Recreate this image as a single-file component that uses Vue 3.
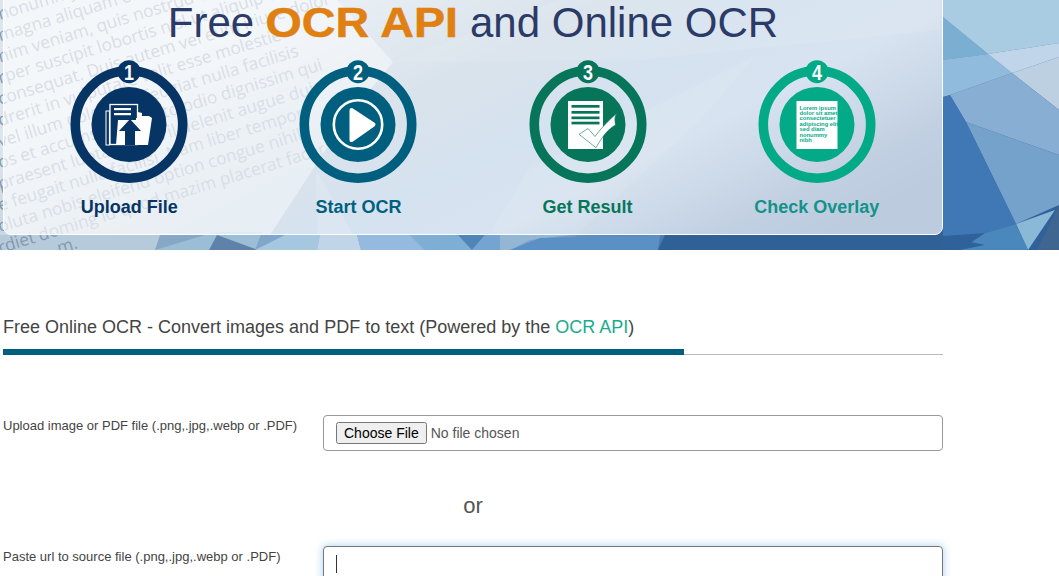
<script setup>
const steps = [
  { n: '1', label: 'Upload File', color: '#063565', text: '#063565' },
  { n: '2', label: 'Start OCR', color: '#005f7f', text: '#005f7f' },
  { n: '3', label: 'Get Result', color: '#07755a', text: '#07755a' },
  { n: '4', label: 'Check Overlay', color: '#02aa87', text: '#14928a' }
]
const lorem = [
  'nonummy nibh euismod tincidunt ut',
  'magna aliquam erat volutpat. Ut wisi',
  'nim veniam, quis nostrud exerci tation ut aliquip',
  'rper suscipit lobortis nisl ut aliquip ex ea',
  'consequat. Duis autem vel eum iriure dolor',
  'drerit in vulputate velit esse molestie',
  'vel illum dolore eu feugiat nulla facilisis',
  'os et accumsan et iusto odio dignissim qui',
  'praesent luptatum zzril delenit augue duis',
  'e feugait nulla facilisi. Nam liber tempor',
  'oluta nobis eleifend option congue nihil',
  'rdiet doming id quod mazim placerat facer'
]
const facets = [
  ['0,0 337,0 393,62 345,120 270,235 0,235', '#ffffff', 0.42],
  ['393,62 560,0 940,0 940,30 640,60', '#ffffff', 0.08],
  ['480,250 528,170 757,55 700,120 560,250', '#ffffff', 0.07],
  ['316,170 362,250 318,250', '#ffffff', 0.14],
  ['0,235 160,235 155,250 0,250', '#b5cbdb', 1],
  ['155,250 215,232 262,232 255,250', '#9bbdd6', 1],
  ['209,250 217,235 258,250', '#5f82aa', 1],
  ['255,250 285,235 320,235 317,250', '#a5c8e0', 1],
  ['317,250 320,235 357,235 361,250', '#c0d6e8', 1],
  ['361,250 357,235 410,235 425,250', '#95bae0', 1],
  ['425,250 410,235 458,235 472,250', '#7eaed4', 1],
  ['458,235 485,235 472,250', '#5085b8', 1],
  ['472,250 485,235 500,235 500,250', '#75a4d0', 1],
  ['500,250 500,235 570,235 530,240 510,250', '#93b6d4', 1],
  ['510,250 540,238 660,235 658,250', '#5a90c4', 1],
  ['658,250 665,235 943,235 943,250', '#2f6196', 1],
  ['943,0 1059,0 1059,43 988,54 943,17', '#a9cce2', 1],
  ['943,17 988,54 943,60', '#7aafd2', 1],
  ['943,60 988,54 1012,73 950,95 943,97', '#90bbdc', 1],
  ['988,54 1059,43 1059,57 1012,73', '#c0d5ea', 1],
  ['1012,73 1059,57 1059,110', '#bdd0e2', 1],
  ['950,95 1012,73 1059,110 1059,155 966,122', '#89aed3', 1],
  ['966,122 1059,155 1059,205 1016,224', '#74a2ca', 1],
  ['943,97 950,95 966,122 1016,224 985,233 943,236', '#4078b6', 1],
  ['1016,224 1055,210 1028,250', '#8ab9d8', 1],
  ['1059,205 1059,250 1037,250', '#3f6690', 1],
  ['985,233 1016,224 1028,250 960,250', '#4a88bc', 1],
  ['943,236 985,245 960,250 943,250', '#2f6298', 1]
]
</script>

<template>
  <div class="page">
    <header class="hero">
      <svg class="hero-bg" viewBox="0 0 1059 250" width="1059" height="250" aria-hidden="true">
        <defs>
          <linearGradient id="heroGrad" gradientUnits="userSpaceOnUse" x1="500" y1="-100" x2="700" y2="300">
            <stop offset="0" stop-color="#c0d2e2" />
            <stop offset="0.3" stop-color="#8aa8c2" />
            <stop offset="0.5" stop-color="#7da5ce" />
            <stop offset="0.66" stop-color="#84a8d0" />
            <stop offset="0.9" stop-color="#3c6aa2" />
            <stop offset="1" stop-color="#30619a" />
          </linearGradient>
        </defs>
        <rect width="1059" height="250" fill="url(#heroGrad)" />
        <polygon v-for="(f, i) in facets" :key="i" :points="f[0]" :fill="f[1]" :fill-opacity="f[2]" />
        <g transform="translate(0 20) rotate(-17)" class="lorem">
          <text v-for="(l, i) in lorem" :key="i" :x="-6.2 * i" :y="i * 20.3">{{ l }}</text>
          <text x="-12" y="241">m.</text>
        </g>
      </svg>

      <div class="panel">
        <h1 class="title">Free <strong>OCR API</strong> and Online OCR</h1>
        <div class="steps">
          <div v-for="s in steps" :key="s.n" class="step">
            <svg class="step-icon" viewBox="0 0 118 124" width="118" height="124">
              <circle cx="59" cy="64.5" r="53.7" fill="none" :stroke="s.color" stroke-width="9.6" />
              <circle cx="59" cy="64.5" r="37.5" :fill="s.color" />
              <circle cx="59" cy="11.7" r="11.5" :fill="s.color" />
              <text x="59" y="20" class="digit" text-anchor="middle" textLength="10" lengthAdjust="spacingAndGlyphs">{{ s.n }}</text>

              <g v-if="s.n === '1'">
                <rect x="36" y="51" width="3.4" height="34" fill="none" stroke="#fff" stroke-width="1" />
                <rect x="40" y="44.5" width="27.5" height="40" fill="none" stroke="#fff" stroke-width="1.3" />
                <rect x="44" y="48" width="17" height="2.2" fill="#fff" />
                <rect x="44" y="53" width="17" height="2.2" fill="#fff" />
                <path d="M48 60 H66 V58 H68 V52 L72 53 V56 H79 L82 58 L78 85 H46 Z" fill="#fff" />
                <path d="M60 59 L71 71 H65 V85 H55 V71 H49 Z" :fill="s.color" />
              </g>

              <g v-if="s.n === '2'">
                <circle cx="59" cy="64.5" r="24.2" fill="none" stroke="#fff" stroke-width="2.6" />
                <path d="M52.5 50 L74.5 64.5 L52.5 80 Z" fill="#fff" stroke="#fff" stroke-width="4" stroke-linejoin="round" />
              </g>

              <g v-if="s.n === '3'">
                <rect x="39" y="41" width="35" height="48" fill="#fff" />
                <rect x="42.5" y="45" width="28" height="2.7" :fill="s.color" />
                <rect x="42.5" y="51" width="28" height="2.7" :fill="s.color" />
                <rect x="42.5" y="56.5" width="28" height="2.7" :fill="s.color" />
                <rect x="42.5" y="61.7" width="28" height="2.7" :fill="s.color" />
                <path d="M50 74.3 L59 68.5 L66 76.5 C72 68 80 60 88 53 C85 57 86 61 86.5 65 C79 69 73 77 67 87.7 Z" fill="#fff" :stroke="s.color" stroke-width="0.6" />
              </g>

              <g v-if="s.n === '4'">
                <rect x="38.5" y="41" width="41" height="48" fill="#fff" />
                <text class="mini" y="49.5" :fill="s.color">
                  <tspan x="41.5">Lorem ipsum</tspan>
                  <tspan x="41.5" dy="5.4">dolor sit amet,</tspan>
                  <tspan x="41.5" dy="5.4">consectetuer</tspan>
                  <tspan x="41.5" dy="5.4">adipiscing elit,</tspan>
                  <tspan x="41.5" dy="5.4">sed diam</tspan>
                  <tspan x="41.5" dy="5.8">nonummy</tspan>
                  <tspan x="41.5" dy="5.2">nibh</tspan>
                </text>
              </g>
            </svg>
            <div class="step-label" :style="{ color: s.text }">{{ s.label }}</div>
          </div>
        </div>
      </div>
    </header>

    <main class="content">
      <h2 class="heading">Free Online OCR - Convert images and PDF to text (Powered by the <a class="link">OCR API</a>)</h2>
      <div class="rule">
        <div class="rule-active"></div>
        <div class="rule-rest"></div>
      </div>

      <div class="row first">
        <label class="row-label">Upload image or PDF file (.png,.jpg,.webp or .PDF)</label>
        <div class="box"><input class="file" type="file" /></div>
      </div>

      <div class="or">or</div>

      <div class="row">
        <label class="row-label">Paste url to source file (.png,.jpg,.webp or .PDF)</label>
        <div class="box focused"><span class="caret"></span></div>
      </div>
    </main>
  </div>
</template>

<style scoped>
.page {
  width: 1059px;
  height: 576px;
  overflow: hidden;
  background: #fff;
  font-family: "Liberation Sans", Arial, sans-serif;
}
.hero {
  position: relative;
  height: 250px;
  overflow: hidden;
}
.hero-bg {
  position: absolute;
  left: 0;
  top: 0;
}
.lorem text {
  font-family: "Open Sans", sans-serif;
  font-size: 17.2px;
  fill: #8598b0;
}
.panel {
  position: relative;
  box-sizing: border-box;
  width: 940px;
  height: 245px;
  margin: -10px 0 0 3px;
  padding: 7px 10.7px 0;
  border: 1px solid #fff;
  border-radius: 8px;
  background: rgba(255, 255, 255, 0.68);
}
.title {
  margin: 0;
  font-size: 42px;
  line-height: 50px;
  font-weight: 400;
  text-align: center;
  color: #2b3a67;
}
.title strong {
  display: inline-block;
  margin: 0 9.5px;
  color: #e07f12;
  font-weight: 700;
  transform: scaleX(1.11);
  -webkit-text-stroke: 0.5px #e07f12;
}
.steps {
  display: grid;
  grid-template-columns: repeat(4, 1fr);
  margin-top: 12px;
}
.step {
  display: flex;
  flex-direction: column;
  align-items: center;
}
.step-icon {
  display: block;
}
.digit {
  font-size: 22px;
  font-weight: 700;
  fill: #fff;
  font-family: "Liberation Sans", Arial, sans-serif;
}
.mini {
  font-size: 5.8px;
  font-weight: 700;
  font-family: "Liberation Sans", Arial, sans-serif;
}
.step-label {
  margin-top: 12px;
  font-size: 18px;
  line-height: 22px;
  font-weight: 700;
}
.content {
  width: 940px;
  margin-left: 3px;
}
.heading {
  margin: 64px 0 0;
  font-size: 18px;
  line-height: 26px;
  font-weight: 400;
  color: #444;
}
.link {
  color: #1bab8c;
}
.rule {
  display: flex;
  margin-top: 9px;
  height: 6px;
}
.rule-active {
  width: 681px;
  background: #005f7f;
}
.rule-rest {
  flex: 1;
  height: 1px;
  align-self: flex-end;
  background: #bbb;
}
.row {
  display: grid;
  grid-template-columns: 320px 620px;
}
.row.first {
  margin-top: 60px;
}
.row-label {
  padding-top: 1px;
  font-size: 13px;
  line-height: 20px;
  color: #444;
}
.box {
  box-sizing: border-box;
  height: 36px;
  border: 1px solid #999;
  border-radius: 4px;
  padding: 6px 12px 0;
  background: #fff;
}
.box.focused {
  position: relative;
  height: 40px;
  border-color: #777;
  box-shadow: 0 0 8px rgba(102, 175, 233, 0.6);
}
.file {
  display: block;
  width: 100%;
  font-family: "Liberation Sans", Arial, sans-serif;
  font-size: 14px;
  color: #555;
}
.caret {
  position: absolute;
  left: 12px;
  top: 8px;
  width: 1px;
  height: 18px;
  background: #333;
}
.or {
  margin-top: 40px;
  height: 55px;
  font-size: 22px;
  line-height: 30px;
  text-align: center;
  color: #555;
}
</style>
